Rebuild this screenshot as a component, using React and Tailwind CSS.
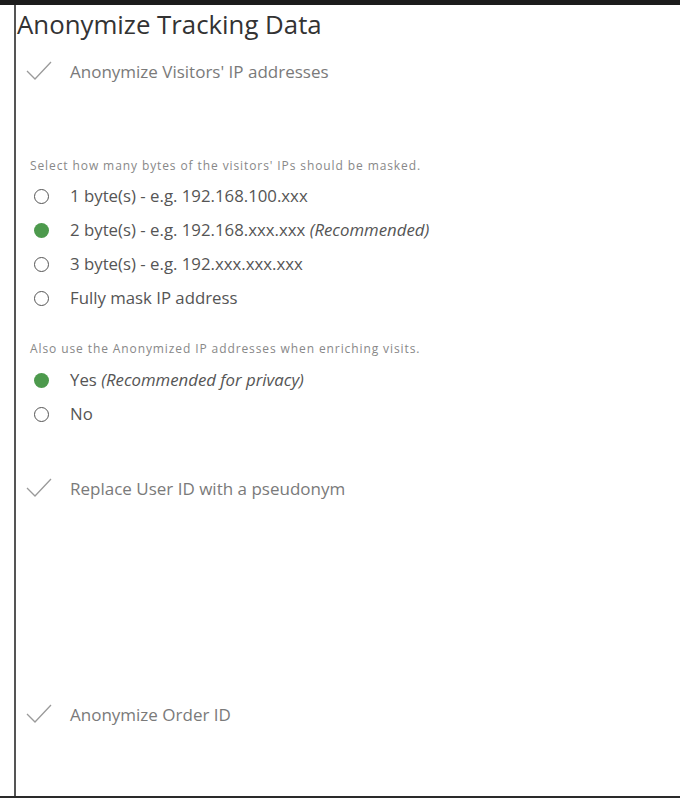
export default function App() {
  const Check = () => (
    <svg width="26" height="22" viewBox="0 0 26 22" className="shrink-0">
      <path d="M1 11 L9 19 L25 2" fill="none" stroke="#9a9a9a" strokeWidth="1.3" />
    </svg>
  );
  const Radio = ({ on }) =>
    on ? (
      <span className="block w-[15px] h-[15px] rounded-full bg-[#4d9a4d] shrink-0" />
    ) : (
      <span className="block w-[15px] h-[15px] rounded-full border-[1.8px] border-[#555] bg-white shrink-0" />
    );
  const RadioRow = ({ on, children }) => (
    <div className="h-[34px] flex items-center pl-[18px]">
      <Radio on={on} />
      <div className="ml-[21px] text-[16.8px] text-[#555] leading-none">{children}</div>
    </div>
  );
  const CheckRow = ({ children, className }) => (
    <div className={"h-[34px] flex items-center pl-[10px] " + (className || "")}>
      <Check />
      <div className="ml-[18px] text-[17px] text-[#7a7a7a] leading-none">{children}</div>
    </div>
  );
  return (
    <div className="w-[680px] h-[798px] bg-white flex flex-col overflow-hidden" style={{ fontFamily: '"Open Sans", "Noto Sans", sans-serif' }}>
      <div className="h-[5px] bg-[#1c1c1c] shrink-0" />
      <div className="flex-1 ml-[14px] border-l-2 border-[#555] flex flex-col">
        <div className="h-[40px] flex items-center pl-[1px] text-[25.8px] text-[#333] leading-none">Anonymize Tracking Data</div>
        <CheckRow className="mt-[9px]">Anonymize Visitors' IP addresses</CheckRow>
        <div className="mt-[68px] h-[20px] flex items-center pl-[14px] text-[12px] tracking-[0.9px] text-[#888] leading-none">Select how many bytes of the visitors' IPs should be masked.</div>
        <div className="mt-[3px]">
          <RadioRow>1 byte(s) - e.g. 192.168.100.xxx</RadioRow>
          <RadioRow on>2 byte(s) - e.g. 192.168.xxx.xxx <i>(Recommended)</i></RadioRow>
          <RadioRow>3 byte(s) - e.g. 192.xxx.xxx.xxx</RadioRow>
          <RadioRow>Fully mask IP address</RadioRow>
        </div>
        <div className="mt-[24px] h-[20px] flex items-center pl-[14px] text-[12px] tracking-[0.9px] text-[#888] leading-none">Also use the Anonymized IP addresses when enriching visits.</div>
        <div className="mt-[4px]">
          <RadioRow on>Yes <i>(Recommended for privacy)</i></RadioRow>
          <RadioRow>No</RadioRow>
        </div>
        <CheckRow className="mt-[40px]">Replace User ID with a pseudonym</CheckRow>
        <CheckRow className="mt-[192px]">Anonymize Order ID</CheckRow>
      </div>
      <div className="h-[2px] bg-[#2a2a2a] shrink-0" />
    </div>
  );
}
